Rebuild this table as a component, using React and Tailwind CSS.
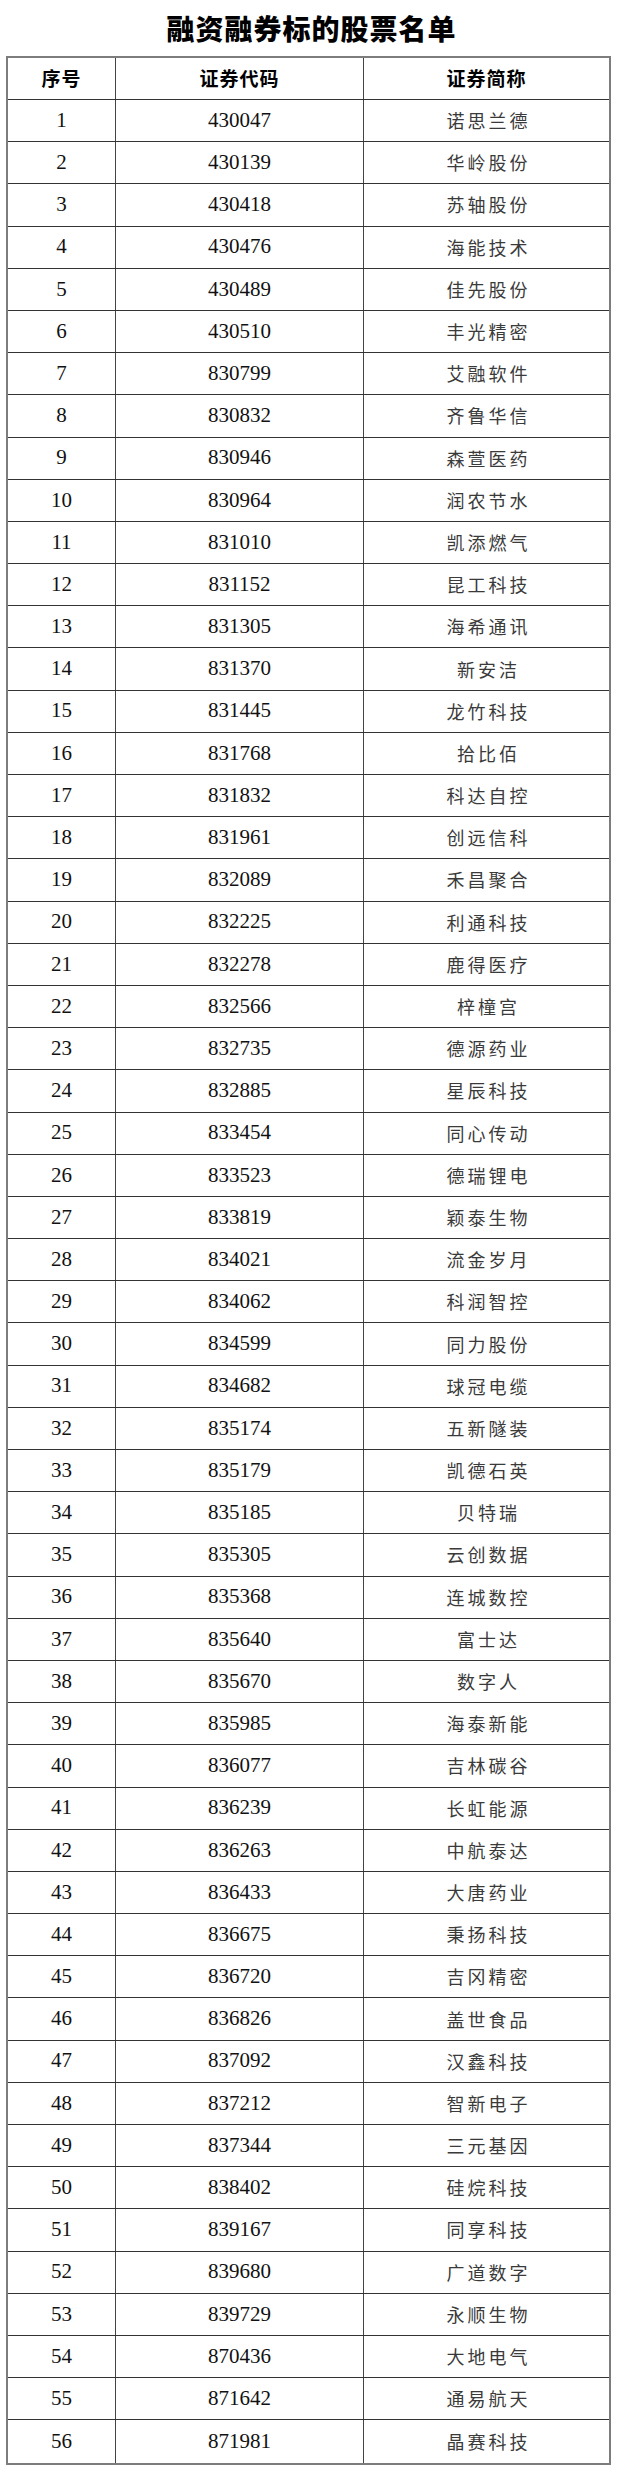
const ROWS = [
  ['430047', '诺思兰德'], ['430139', '华岭股份'], ['430418', '苏轴股份'], ['430476', '海能技术'],
  ['430489', '佳先股份'], ['430510', '丰光精密'], ['830799', '艾融软件'], ['830832', '齐鲁华信'],
  ['830946', '森萱医药'], ['830964', '润农节水'], ['831010', '凯添燃气'], ['831152', '昆工科技'],
  ['831305', '海希通讯'], ['831370', '新安洁'], ['831445', '龙竹科技'], ['831768', '拾比佰'],
  ['831832', '科达自控'], ['831961', '创远信科'], ['832089', '禾昌聚合'], ['832225', '利通科技'],
  ['832278', '鹿得医疗'], ['832566', '梓橦宫'], ['832735', '德源药业'], ['832885', '星辰科技'],
  ['833454', '同心传动'], ['833523', '德瑞锂电'], ['833819', '颖泰生物'], ['834021', '流金岁月'],
  ['834062', '科润智控'], ['834599', '同力股份'], ['834682', '球冠电缆'], ['835174', '五新隧装'],
  ['835179', '凯德石英'], ['835185', '贝特瑞'], ['835305', '云创数据'], ['835368', '连城数控'],
  ['835640', '富士达'], ['835670', '数字人'], ['835985', '海泰新能'], ['836077', '吉林碳谷'],
  ['836239', '长虹能源'], ['836263', '中航泰达'], ['836433', '大唐药业'], ['836675', '秉扬科技'],
  ['836720', '吉冈精密'], ['836826', '盖世食品'], ['837092', '汉鑫科技'], ['837212', '智新电子'],
  ['837344', '三元基因'], ['838402', '硅烷科技'], ['839167', '同享科技'], ['839680', '广道数字'],
  ['839729', '永顺生物'], ['870436', '大地电气'], ['871642', '通易航天'], ['871981', '晶赛科技'],
];

const serif = "font-['Liberation_Serif','Noto_Sans_CJK_SC',serif]";
const cjk = "font-['Noto_Sans_CJK_SC',sans-serif]";

export default function App() {
  return (
    <div className="w-[623px] bg-white text-[#111]">
      {/* Title */}
      <div className="flex h-[56px] items-center justify-center">
        <h1 className={`${cjk} text-[28px] font-black leading-none tracking-[1px] text-black`}>
          融资融券标的股票名单
        </h1>
      </div>

      {/* Table */}
      <div className="ml-[6px] w-[605px] border-2 border-[#7d7d7d]">
        <div className="grid h-[42px] grid-cols-[108px_248px_1fr] border-b-[1.5px] border-[#333]">
          <HeadCell className="border-r-[1.5px] border-[#444]">序号</HeadCell>
          <HeadCell className="border-r-[1.5px] border-[#444]">证券代码</HeadCell>
          <HeadCell>证券简称</HeadCell>
        </div>
        {ROWS.map(([code, name], i) => (
          <div
            key={code}
            className={`grid h-[42.2px] grid-cols-[108px_248px_1fr] ${i < ROWS.length - 1 ? 'border-b-[1.5px] border-[#333]' : ''}`}
          >
            <div className={`${serif} flex items-center justify-center border-r-[1.5px] border-[#444] text-[21px]`}>
              {i + 1}
            </div>
            <div className={`${serif} flex items-center justify-center border-r-[1.5px] border-[#444] text-[21px]`}>
              {code}
            </div>
            <div className={`${cjk} flex items-center justify-center pl-[4px] text-[18px] tracking-[3px] text-[#3a3a3a]`}>
              {name}
            </div>
          </div>
        ))}
      </div>
    </div>
  );
}

function HeadCell({ children, className = '' }) {
  return (
    <div className={`flex items-center justify-center font-['Noto_Sans_CJK_SC',sans-serif] text-[19px] font-bold tracking-[1px] text-black ${className}`}>
      {children}
    </div>
  );
}
